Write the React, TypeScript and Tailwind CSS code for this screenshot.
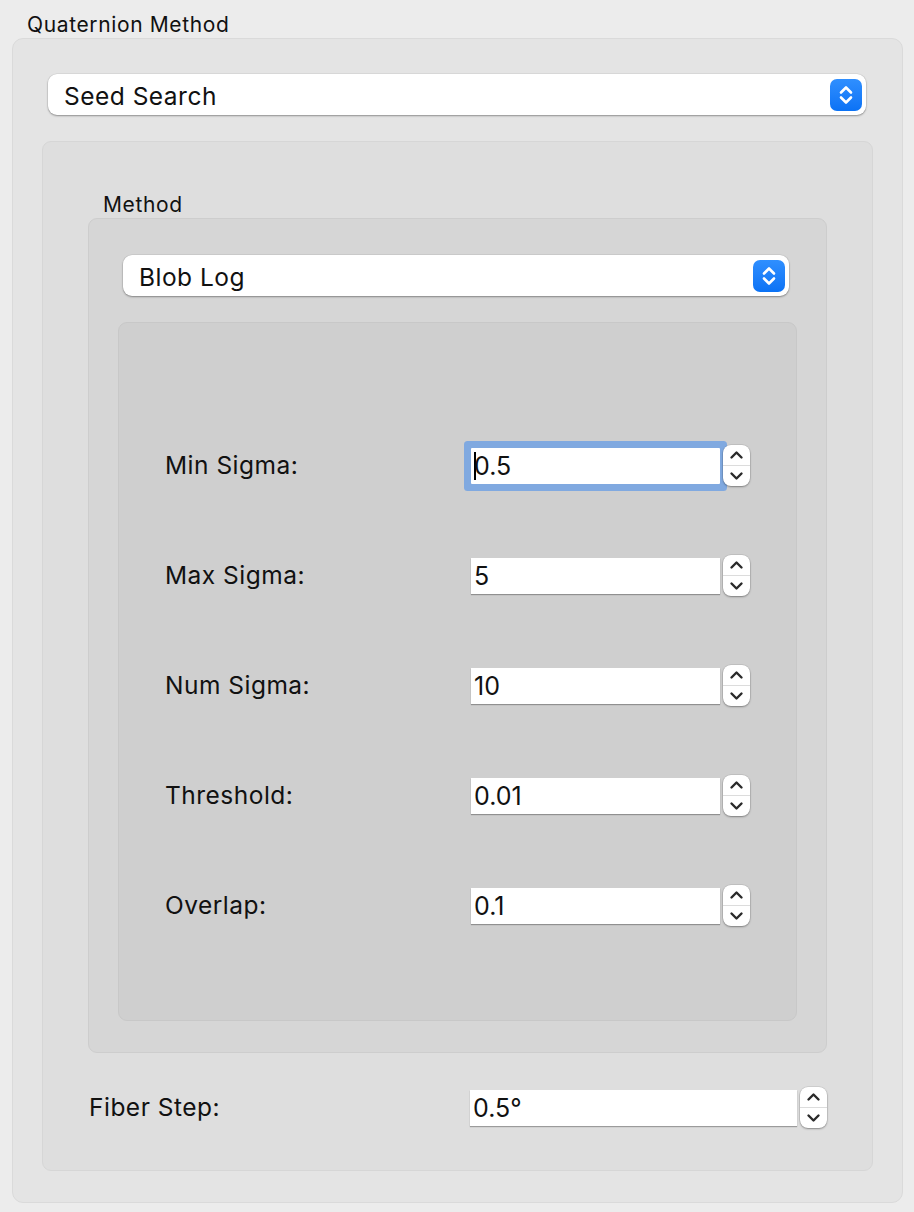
import React from "react";

const font = { fontFamily: "Inter, 'Liberation Sans', sans-serif" };

const ChevronUpDown = ({ color = "#fff" }: { color?: string }) => (
  <svg width="18" height="24" viewBox="0 0 18 24" fill="none">
    <path d="M4 9.5 L9 4.5 L14 9.5" stroke={color} strokeWidth="2.6" strokeLinecap="round" strokeLinejoin="round" />
    <path d="M4 14.5 L9 19.5 L14 14.5" stroke={color} strokeWidth="2.6" strokeLinecap="round" strokeLinejoin="round" />
  </svg>
);

const Popup = ({ label, className }: { label: string; className: string }) => (
  <div className={`flex h-[41px] items-center justify-between rounded-[9px] bg-white pl-[16px] pr-[4px] shadow-[0_1px_2px_rgba(0,0,0,0.35),0_0_0_0.5px_rgba(0,0,0,0.08)] ${className}`}>
    <span className="pt-[3px] text-[24.5px] leading-none tracking-[0.02em] text-[#111]">{label}</span>
    <div className="flex h-[32px] w-[32px] items-center justify-center rounded-[7px] bg-gradient-to-b from-[#2f8fff] to-[#0a72f5]">
      <ChevronUpDown />
    </div>
  </div>
);

const Stepper = () => (
  <div className="flex h-[41px] w-[27px] flex-col overflow-hidden rounded-[8px] bg-white shadow-[0_1px_2px_rgba(0,0,0,0.35),0_0_0_0.5px_rgba(0,0,0,0.12)]">
    <div className="flex flex-1 items-center justify-center border-b border-[#dcdcdc]">
      <svg width="15" height="10" viewBox="0 0 15 10"><path d="M2.5 7.5 L7.5 2.5 L12.5 7.5" stroke="#2a2a2a" strokeWidth="2.4" fill="none" strokeLinecap="round" strokeLinejoin="round" /></svg>
    </div>
    <div className="flex flex-1 items-center justify-center">
      <svg width="15" height="10" viewBox="0 0 15 10"><path d="M2.5 2.5 L7.5 7.5 L12.5 2.5" stroke="#2a2a2a" strokeWidth="2.4" fill="none" strokeLinecap="round" strokeLinejoin="round" /></svg>
    </div>
  </div>
);

const NumField = ({ value, focused, width }: { value: string; focused?: boolean; width: string }) => (
  <div className="flex items-center gap-[3px]">
    <div
      className={`flex h-[36px] items-center bg-white pl-[3px] ${width} ${
        focused ? "rounded-[1px] shadow-[0_0_0_7px_#80a9e0]" : "shadow-[0_1px_1px_rgba(0,0,0,0.3)]"
      }`}
    >
      {focused && <span className="mr-[-2px] h-[28px] w-[2px] bg-black" />}
      <span className="pt-[1px] text-[25px] leading-none text-[#111]">{value}</span>
    </div>
    <Stepper />
  </div>
);

const params = [
  { label: "Min Sigma:", value: "0.5", focused: true },
  { label: "Max Sigma:", value: "5" },
  { label: "Num Sigma:", value: "10" },
  { label: "Threshold:", value: "0.01" },
  { label: "Overlap:", value: "0.1" },
];

export default function App() {
  return (
    <div className="h-[1212px] w-[914px] bg-[#ececec] px-[12px]" style={font}>
      <div className="h-[38px] pl-[15px] pt-[12px] text-[21px] leading-[26px] tracking-[0.03em] text-[#111]">Quaternion Method</div>
      <div className="flex h-[1165px] w-[891px] flex-col rounded-[11px] border border-[#dadada] bg-[#e4e4e4] px-[29px] pt-[35px]">
        <Popup label="Seed Search" className="ml-[6px] mr-[7px]" />
        <div className="mt-[26px] flex h-[1030px] flex-col rounded-[9px] border border-[#d6d6d6] bg-[#dedede] px-[45px] pt-[50px]">
          <div className="pl-[15px] text-[21px] leading-[26px] tracking-[0.03em] text-[#111]">Method</div>
          <div className="flex h-[835px] flex-col rounded-[9px] border border-[#cdcdcd] bg-[#d6d6d6] px-[29px] pt-[36px]">
            <Popup label="Blob Log" className="ml-[5px] mr-[8px]" />
            <div className="mt-[26px] flex h-[699px] flex-col gap-[69px] rounded-[9px] border border-[#c8c8c8] bg-[#cfcfcf] pl-[46px] pr-[46px] pt-[122px]">
              {params.map((p) => (
                <div key={p.label} className="flex h-[41px] items-center justify-between">
                  <span className="text-[24.5px] leading-none tracking-[0.02em] text-[#111]">{p.label}</span>
                  <NumField value={p.value} focused={p.focused} width="w-[249px]" />
                </div>
              ))}
            </div>
          </div>
          <div className="mt-[34px] flex h-[41px] items-center justify-between pl-[1px]">
            <span className="text-[24.5px] leading-none tracking-[0.02em] text-[#111]">Fiber Step:</span>
            <NumField value="0.5°" width="w-[327px]" />
          </div>
        </div>
      </div>
    </div>
  );
}
